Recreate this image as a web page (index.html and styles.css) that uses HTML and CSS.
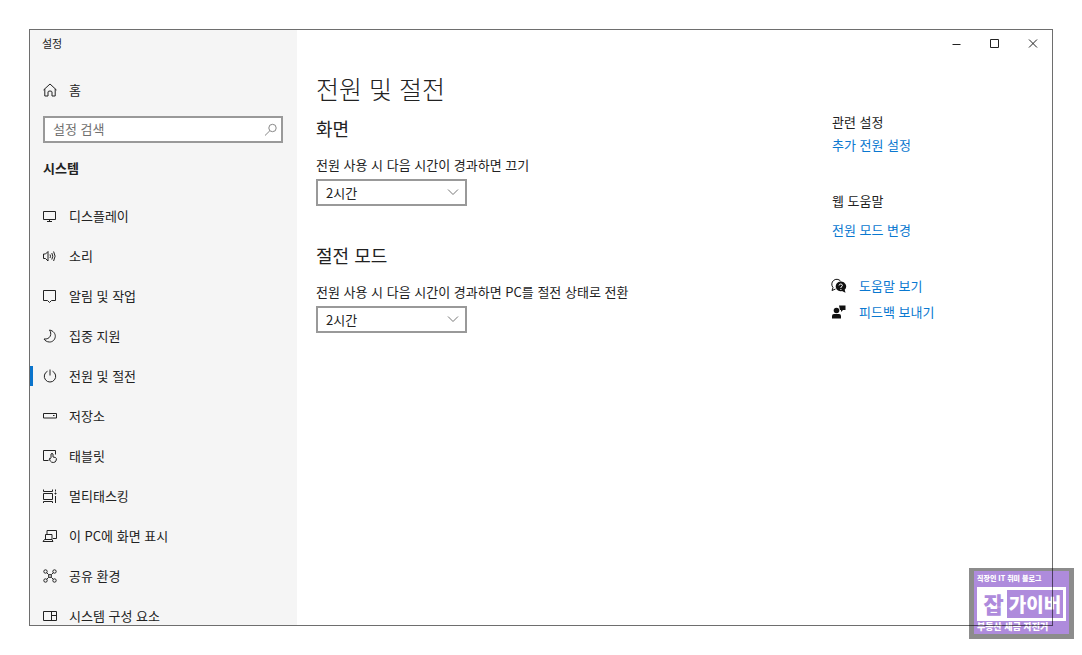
FILE: index.html
```
<!DOCTYPE html>
<html lang="ko">
<head>
    <meta charset="UTF-8">
    <meta name="viewport" content="width=device-width, initial-scale=1.0">
    <title>설정</title>
    <link rel="stylesheet" href="styles.css">
</head>
<body>
    <div class="window">
        <!-- Left navigation -->
        <aside class="sidebar">
            <div class="window-title">설정</div>
            <a class="nav-link home" href="#">
                <svg class="icon" viewBox="0 0 16 16"><path d="M1.500 8 8 2l6.500 6M2.800 7v7H6v-4q0-1 2-1t2 1v4h3.200V7"/></svg>
                홈
            </a>
            <form class="search">
                <input type="text" aria-label="설정 검색" placeholder="설정 검색">
                <button type="submit" aria-label="검색">
                    <svg class="icon" viewBox="0 0 16 16"><circle cx="9.500" cy="6" r="3.700"/><path d="M6.800 8.800 2 13.500"/></svg>
                </button>
            </form>
            <h2 class="sidebar-heading">시스템</h2>
            <nav>
                <a class="nav-link" href="#">
                    <svg class="icon" viewBox="0 0 16 16"><path d="M1.500 3.500h12v8h-12zM7.500 11.500v2M5 13.500h5"/></svg>
                    디스플레이
                </a>
                <a class="nav-link" href="#">
                    <svg class="icon" viewBox="0 0 16 16"><path d="M1.500 6v4.500h2L6 13V3.500L3.500 6zM8 6.500q1 1.700 0 3.500M9.800 5q2 3.200 0 6.500M11.600 3.500q3 4.700 0 9.500"/></svg>
                    소리
                </a>
                <a class="nav-link" href="#">
                    <svg class="icon" viewBox="0 0 16 16"><path d="M1.500 2.500h12v10H9.500l-2 2-2-2h-4z"/></svg>
                    알림 및 작업
                </a>
                <a class="nav-link" href="#">
                    <svg class="icon" viewBox="0 0 16 16"><path d="M7.500 2c4 .8 6 3.800 5.800 6.500-.3 3.500-3 5.700-6 5.500-2.200-.1-4.300-1.200-5.300-3 3 .3 5.200-.8 6.200-2.800 1-2.100.6-4.400-.7-6.200z"/></svg>
                    집중 지원
                </a>
                <a class="nav-link active" href="#" aria-current="page">
                    <svg class="icon" viewBox="0 0 16 16"><path d="M5.500 3.200a5.700 5.700 0 1 0 5 0M8 1.500v6"/></svg>
                    전원 및 절전
                </a>
                <a class="nav-link" href="#">
                    <svg class="icon" viewBox="0 0 16 16"><path d="M1.500 5.500h13v4.500h-13zM11 7.500h1.500"/></svg>
                    저장소
                </a>
                <a class="nav-link" href="#">
                    <svg class="icon" viewBox="0 0 16 16"><path d="M6.500 12.500h-5v-10h12v4M9 10V6q1-1.200 2 0v3l2.500.5q1.200.5.8 2.500-.5 2.500-3 2.500-2 0-3-1.500L7 11q.5-1.500 2 0"/></svg>
                    태블릿
                </a>
                <a class="nav-link" href="#">
                    <svg class="icon" viewBox="0 0 16 16"><path d="M1.500 1.500v2h9v-2M1.500 5.500h9v6h-9zM1.500 15v-1.500h9V15M13.500 1.500v2M13.500 8v7M12.500 5.500h2M13.500 4.500v2"/></svg>
                    멀티태스킹
                </a>
                <a class="nav-link" href="#">
                    <svg class="icon" viewBox="0 0 16 16"><path d="M5 6.500v-4h9.500v8H11M3.500 6.500H10v5H3.500zM1 13.500h10l-1-2H2.500z"/></svg>
                    이 PC에 화면 표시
                </a>
                <a class="nav-link" href="#">
                    <svg class="icon" viewBox="0 0 16 16"><circle cx="3.500" cy="3.500" r="1.700"/><circle cx="12.500" cy="3.500" r="1.700"/><circle cx="3.500" cy="12.500" r="1.700"/><circle cx="12.500" cy="12.500" r="1.700"/><path d="m4.700 4.700 2 2h2.600l2-2M4.700 11.300l2-2h2.600l2 2M6.700 6.700v2.600M9.300 6.700v2.600"/></svg>
                    공유 환경
                </a>
                <a class="nav-link" href="#">
                    <svg class="icon" viewBox="0 0 16 16"><path d="M1.500 3.500h13v9h-13zM9.500 3.500v9M9.500 7.500h5"/></svg>
                    시스템 구성 요소
                </a>
            </nav>
        </aside>

        <div class="page">
            <div class="caption-buttons">
                <button type="button" aria-label="최소화"><svg class="icon" viewBox="0 0 16 16"><path d="M3.500 8.500h8"/></svg></button>
                <button type="button" aria-label="최대화"><svg class="icon" viewBox="0 0 16 16"><path d="M3.500 3.500h8v8h-8z"/></svg></button>
                <button type="button" aria-label="닫기"><svg class="icon" viewBox="0 0 16 16"><path d="m4 3.500 8 8M12 3.500l-8 8"/></svg></button>
            </div>
            <div class="columns">
                <main class="settings">
                    <h1>전원 및 절전</h1>
                    <section>
                        <h2>화면</h2>
                        <label for="screenOff">전원 사용 시 다음 시간이 경과하면 끄기</label>
                        <div class="select-box">
                            <select id="screenOff">
                                <option>1시간</option>
                                <option selected>2시간</option>
                                <option>3시간</option>
                            </select>
                            <svg class="icon" viewBox="0 0 16 16"><path d="m3 5.500 5 5 5-5"/></svg>
                        </div>
                    </section>
                    <section>
                        <h2>절전 모드</h2>
                        <label for="sleepAfter">전원 사용 시 다음 시간이 경과하면 PC를 절전 상태로 전환</label>
                        <div class="select-box">
                            <select id="sleepAfter">
                                <option>1시간</option>
                                <option selected>2시간</option>
                                <option>3시간</option>
                            </select>
                            <svg class="icon" viewBox="0 0 16 16"><path d="m3 5.500 5 5 5-5"/></svg>
                        </div>
                    </section>
                </main>

                <!-- Related links -->
                <aside class="related">
                    <h3>관련 설정</h3>
                    <a href="#">추가 전원 설정</a>
                    <h3 class="web-help">웹 도움말</h3>
                    <a class="web-link" href="#">전원 모드 변경</a>
                    <div class="support">
                        <a href="#">
                            <svg class="icon solid" viewBox="0 0 16 16"><path class="line" d="M9.500 3A4.700 4.700 0 1 0 2 9.500L1 12.500l3.500-1.500"/><path d="M9.500 3.500a4.900 4.900 0 1 0 1.500 9.600l3.500 1.700-.8-3A4.900 4.900 0 0 0 9.500 3.500z"/><path class="mark" d="M8 7.500q.3-1.500 1.800-1.500t1.600 1.400q0 1-1.500 1.800v.8M9.900 11v1"/></svg>
                            도움말 보기
                        </a>
                        <a href="#">
                            <svg class="icon solid" viewBox="0 0 16 16"><circle cx="5.500" cy="6.500" r="2.800"/><path d="M1 14.500V12q0-2 2-2h5q2 0 2 2v2.500zM8 1.500h6.500V6H12l-2 2V6H9z"/></svg>
                            피드백 보내기
                        </a>
                    </div>
                </aside>
            </div>
        </div>
    </div>

    <!-- Blog badge over the window corner -->
    <div class="badge">
        <div class="badge-top">직장인 IT 취미 블로그</div>
        <div class="badge-name"><span>잡</span><strong>가이버</strong></div>
        <div class="badge-bottom">부동산 세금 자전거</div>
    </div>
</body>
</html>
```
FILE: styles.css
```
* {
    box-sizing: border-box;
}
body {
    margin: 0;
    padding: 29px;
    height: 100vh;
    overflow: hidden;
    background-color: #fff;
    color: #222;
    font-family: "Noto Sans CJK KR", sans-serif;
    font-size: 13px;
    line-height: 20px;
}
h1,
h2,
h3 {
    margin: 0;
    font-weight: 400;
}
a {
    color: #0a78d0;
    text-decoration: none;
}
button {
    padding: 0;
    border: none;
    background: none;
    cursor: pointer;
}
.icon {
    display: block;
    flex: none;
    width: 16px;
    height: 16px;
    fill: none;
    stroke: #222;
    stroke-width: 1;
}
.window {
    display: grid;
    grid-template-columns: 267px 1fr;
    height: 100%;
    border: 1px solid #6e6e6e;
    overflow: hidden;
}

/* Sidebar */
.sidebar {
    min-height: 0;
    overflow: hidden;
    background-color: #f5f5f5;
}
.window-title {
    height: 28px;
    padding-left: 12px;
    font-size: 11px;
    line-height: 26px;
}
.nav-link {
    display: flex;
    align-items: center;
    gap: 11px;
    height: 40px;
    padding-left: 12px;
    color: #222;
}
.nav-link.home {
    margin-top: 12px;
}
.nav-link.active {
    position: relative;
}
.nav-link.active::before {
    content: "";
    position: absolute;
    left: 0;
    top: 10px;
    width: 3px;
    height: 20px;
    background-color: #0a74cc;
}
.search {
    display: flex;
    align-items: center;
    height: 27px;
    margin: 6px 14px 0 13px;
    padding: 0 2px 0 8px;
    border: 2px solid #999;
    background-color: #fff;
}
.search input {
    flex: 1;
    min-width: 0;
    height: 20px;
    padding: 0 0 2px;
    border: none;
    outline: none;
    background: none;
    font: inherit;
}
.search input::placeholder {
    color: #707070;
}
.search .icon {
    stroke: #888;
}
.sidebar-heading {
    margin: 5px 0 8px;
    padding-left: 13px;
    font-size: 13px;
    font-weight: 700;
    line-height: 40px;
}

/* Page */
.caption-buttons {
    display: flex;
    justify-content: flex-end;
    height: 28px;
}
.caption-buttons button {
    display: flex;
    align-items: center;
    justify-content: center;
    width: 38px;
}
.columns {
    display: flex;
    justify-content: space-between;
    padding-left: 19px;
}
.settings {
    padding-top: 12px;
}
.settings h1 {
    margin-bottom: 8px;
    font-size: 25px;
    font-weight: 300;
    line-height: 36px;
}
.settings section {
    margin-bottom: 35px;
}
.settings h2 {
    margin-bottom: 13px;
    font-size: 18px;
    line-height: 28px;
}
.settings label {
    display: block;
    margin-bottom: 4px;
}
.select-box {
    position: relative;
    width: 151px;
}
.select-box select {
    display: block;
    width: 100%;
    height: 27px;
    padding: 0 8px;
    appearance: none;
    border: 2px solid #999;
    border-radius: 0;
    background-color: #fff;
    color: #222;
    font: inherit;
}
.select-box .icon {
    position: absolute;
    right: 6px;
    top: 5px;
    stroke: #777;
    pointer-events: none;
}

/* Related links */
.related {
    width: 220px;
    padding-top: 54px;
}
.related h3 {
    margin-bottom: 3px;
    font-size: 13px;
}
.related .web-help {
    margin: 36px 0 9px;
}
.related a {
    display: block;
}
.support {
    margin-top: 36px;
}
.support .icon {
    margin-left: -1px;
}
.support a {
    display: flex;
    align-items: center;
    gap: 12px;
    margin-bottom: 6px;
}
.icon.solid {
    fill: #111;
    stroke: none;
}
.icon .line {
    fill: none;
    stroke: #111;
}
.icon .mark {
    fill: none;
    stroke: #fff;
}

/* Badge */
.badge {
    position: fixed;
    right: 8px;
    bottom: 16px;
    width: 105px;
    height: 71px;
    padding: 0 3px;
    border: 4px solid #8c8c8c;
    border-width: 3px 5px 5px;
    background-color: #ae8bdc;
    color: #fff;
    font-weight: 900;
    mix-blend-mode: multiply;
}
.badge-top {
    font-size: 7px;
    line-height: 14px;
}
.badge-name {
    display: flex;
    height: 34px;
    margin-top: 2px;
    border: 3px solid #fff;
    font-size: 19px;
    line-height: 28px;
}
.badge-name span {
    width: 27px;
    background-color: #fff;
    color: #ae8bdc;
    font-size: 22px;
    line-height: 26px;
    text-align: center;
}
.badge-name strong {
    flex: 1;
    font-weight: 900;
    text-align: center;
}
.badge-bottom {
    font-size: 9px;
    line-height: 12px;
}
```
